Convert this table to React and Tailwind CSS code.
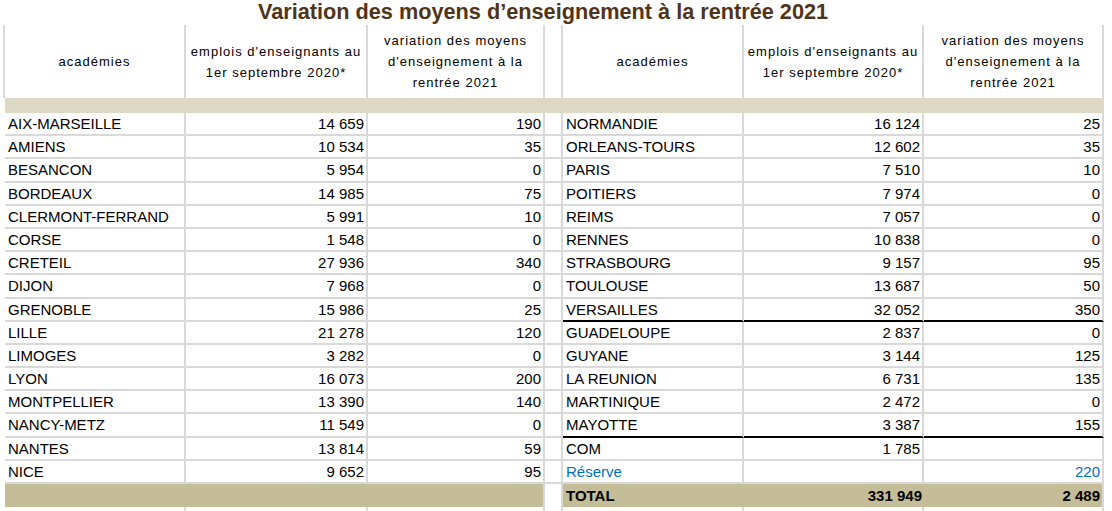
import React from "react";

const left = [
  ["AIX-MARSEILLE", "14 659", "190"],
  ["AMIENS", "10 534", "35"],
  ["BESANCON", "5 954", "0"],
  ["BORDEAUX", "14 985", "75"],
  ["CLERMONT-FERRAND", "5 991", "10"],
  ["CORSE", "1 548", "0"],
  ["CRETEIL", "27 936", "340"],
  ["DIJON", "7 968", "0"],
  ["GRENOBLE", "15 986", "25"],
  ["LILLE", "21 278", "120"],
  ["LIMOGES", "3 282", "0"],
  ["LYON", "16 073", "200"],
  ["MONTPELLIER", "13 390", "140"],
  ["NANCY-METZ", "11 549", "0"],
  ["NANTES", "13 814", "59"],
  ["NICE", "9 652", "95"],
];

const right = [
  ["NORMANDIE", "16 124", "25"],
  ["ORLEANS-TOURS", "12 602", "35"],
  ["PARIS", "7 510", "10"],
  ["POITIERS", "7 974", "0"],
  ["REIMS", "7 057", "0"],
  ["RENNES", "10 838", "0"],
  ["STRASBOURG", "9 157", "95"],
  ["TOULOUSE", "13 687", "50"],
  ["VERSAILLES", "32 052", "350", "line"],
  ["GUADELOUPE", "2 837", "0"],
  ["GUYANE", "3 144", "125"],
  ["LA REUNION", "6 731", "135"],
  ["MARTINIQUE", "2 472", "0"],
  ["MAYOTTE", "3 387", "155", "line"],
  ["COM", "1 785", ""],
  ["Réserve", "", "220", "blue"],
];

const grid = "grid grid-cols-[181px_182px_177px_18px_181px_180px_180px]";

// plain body cell
const Cell = ({ children, num, dark, className = "" }) => (
  <div
    className={
      "h-[23.2px] border-r-2 border-b-2 whitespace-nowrap leading-[21px] " +
      (num ? "text-right pr-[2px] " : "pl-[3px] ") +
      (dark ? "border-b-black " : "border-b-[#d9d9d9] ") +
      "border-r-[#d9d9d9] " +
      className
    }
  >
    {children}
  </div>
);

const HeadCell = ({ children, className = "" }) => (
  <div
    className={
      "h-[73px] border-r-2 border-[#d9d9d9] flex items-center justify-center text-center text-[13px] leading-[21px] tracking-[1px] " +
      className
    }
  >
    {children}
  </div>
);

const Head = () => (
  <>
    <HeadCell className="border-l-2 -ml-[2px]">académies</HeadCell>
    <HeadCell>
      emplois d'enseignants au
      <br />
      1er septembre 2020*
    </HeadCell>
    <HeadCell>
      variation des moyens
      <br />
      d'enseignement à la
      <br />
      rentrée 2021
    </HeadCell>
  </>
);

export default function App() {
  return (
    <div className="w-[1112px] h-[511px] overflow-hidden bg-white text-black font-['Liberation_Sans',Arial,sans-serif]">
      <h1 className="h-[25px] pr-[26px] text-center text-[21.7px] leading-[23px] font-bold text-[#4f3419]">
        Variation des moyens d’enseignement à la rentrée 2021
      </h1>

      <div className={grid + " ml-[5px] text-[15px]"}>
        <Head />
        <HeadCell />
        <Head />

        <div className="col-span-7 h-[15px] bg-[#ddd9c4]" />

        {left.map((l, i) => {
          const r = right[i];
          const dark = r[3] === "line";
          const blue = r[3] === "blue" ? "text-[#0070c0]" : "";
          return (
            <React.Fragment key={i}>
              <Cell>{l[0]}</Cell>
              <Cell num>{l[1]}</Cell>
              <Cell num>{l[2]}</Cell>
              <Cell />
              <Cell dark={dark} className={blue}>
                {r[0]}
              </Cell>
              <Cell num dark={dark}>
                {r[1]}
              </Cell>
              <Cell num dark={dark} className={blue}>
                {r[2]}
              </Cell>
            </React.Fragment>
          );
        })}

        {/* total */}
        <div className="col-span-3 h-[23.2px] bg-[#c4bd97] border-r-2 border-[#d9d9d9]" />
        <div className="h-[23.2px] border-r-2 border-[#d9d9d9]" />
        <div className="h-[23.2px] bg-[#c4bd97] pl-[3px] font-bold leading-[23px]">TOTAL</div>
        <div className="h-[23.2px] bg-[#c4bd97] pr-[2px] text-right font-bold leading-[23px]">331 949</div>
        <div className="h-[23.2px] bg-[#c4bd97] pr-[2px] text-right font-bold leading-[23px] border-r-2 border-[#d9d9d9]">
          2 489
        </div>

        {[0, 1, 2, 3, 4, 5, 6].map((k) => (
          <div key={k} className="h-[10px] border-r-2 border-[#d9d9d9]" />
        ))}
      </div>
    </div>
  );
}
